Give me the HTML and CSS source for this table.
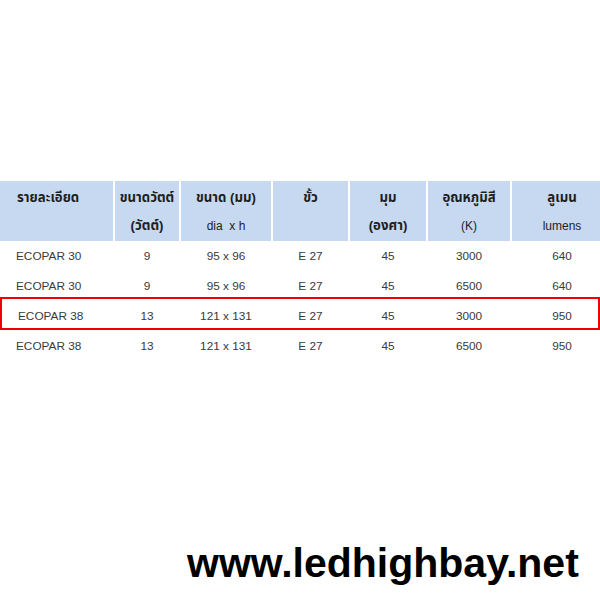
FILE: index.html
```html
<!DOCTYPE html>
<html lang="th">
<head>
<meta charset="utf-8">
<link rel="stylesheet" href="styles.css">
</head>
<body>
<div class="page">
  <div class="table">
    <div class="row head">
      <div class="cell left"><span class="b">รายละเอียด</span></div>
      <div class="cell"><span class="b">ขนาดวัตต์</span><span class="b">(วัตต์)</span></div>
      <div class="cell"><span class="b">ขนาด (มม)</span><span>dia&nbsp; x h</span></div>
      <div class="cell"><span class="b">ขั้ว</span></div>
      <div class="cell"><span class="b">มุม</span><span class="b">(องศา)</span></div>
      <div class="cell"><span class="b">อุณหภูมิสี</span><span>(K)</span></div>
      <div class="cell"><span class="b">ลูเมน</span><span>lumens</span></div>
    </div>
    <div class="row data">
      <div class="cell left">ECOPAR 30</div><div class="cell">9</div><div class="cell">95 x 96</div><div class="cell">E 27</div><div class="cell">45</div><div class="cell">3000</div><div class="cell">640</div>
    </div>
    <div class="row data">
      <div class="cell left">ECOPAR 30</div><div class="cell">9</div><div class="cell">95 x 96</div><div class="cell">E 27</div><div class="cell">45</div><div class="cell">6500</div><div class="cell">640</div>
    </div>
    <div class="row data marked">
      <div class="cell left shift">ECOPAR 38</div><div class="cell">13</div><div class="cell">121 x 131</div><div class="cell">E 27</div><div class="cell">45</div><div class="cell">3000</div><div class="cell">950</div>
    </div>
    <div class="row data">
      <div class="cell left">ECOPAR 38</div><div class="cell">13</div><div class="cell">121 x 131</div><div class="cell">E 27</div><div class="cell">45</div><div class="cell">6500</div><div class="cell">950</div>
    </div>
  </div>
  <div class="site">www.ledhighbay.net</div>
</div>
</body>
</html>
```
FILE: styles.css
```css
html, body {
  margin: 0;
  padding: 0;
  background: #ffffff;
}
body {
  width: 600px;
  height: 600px;
  overflow: hidden;
  font-family: "Liberation Sans", "Noto Sans Thai", "Noto Sans", sans-serif;
}
.page {
  padding-top: 181px;
}
.table {
  width: 612px;
}
.row {
  display: grid;
  grid-template-columns: 113px 64px 90px 75px 76px 82px 100px;
  column-gap: 2px;
}
.head .cell {
  background: #c6d9f1;
  height: 60px;
  box-sizing: border-box;
  padding-top: 3px;
  display: flex;
  flex-direction: column;
  align-items: center;
  font-size: 12px;
  line-height: 28px;
  color: #1e1e1e;
  white-space: nowrap;
}
.head .cell.left {
  align-items: flex-start;
  padding-left: 17px;
}
.b {
  font-weight: bold;
  font-size: 13.2px;
}
.data {
  height: 30px;
  line-height: 30px;
  font-size: 11.8px;
  color: #3a3a3a;
}
.data .cell {
  text-align: center;
  white-space: nowrap;
}
.data .cell.left {
  text-align: left;
  padding-left: 16px;
}
.data .cell.left.shift {
  padding-left: 18px;
}
.marked {
  position: relative;
}
.marked::after {
  content: "";
  position: absolute;
  top: -4px;
  bottom: 1px;
  left: 0;
  right: 12px;
  border: 2px solid #ee0000;
}
.site {
  margin-top: 179px;
  padding-left: 187px;
  font-size: 41px;
  line-height: 46px;
  font-weight: bold;
  color: #000000;
  white-space: nowrap;
}
```
